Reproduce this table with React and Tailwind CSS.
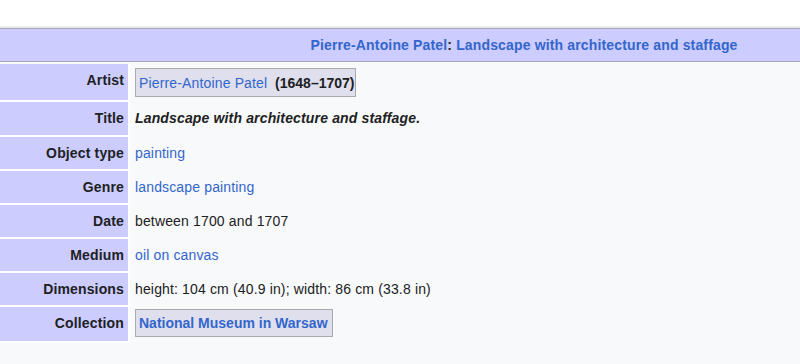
import React from 'react';

const rows = [
    { label: 'Artist', h: 'h-[38px]', kind: 'artist' },
    { label: 'Title', h: 'h-[35px]', kind: 'title' },
    { label: 'Object type', h: 'h-[34px]', kind: 'link', text: 'painting' },
    { label: 'Genre', h: 'h-[34px]', kind: 'link', text: 'landscape painting' },
    { label: 'Date', h: 'h-[34px]', kind: 'text', text: 'between 1700 and 1707' },
    { label: 'Medium', h: 'h-[34px]', kind: 'link', text: 'oil on canvas' },
    { label: 'Dimensions', h: 'h-[34px]', kind: 'text', text: 'height: 104 cm (40.9 in); width: 86 cm (33.8 in)' },
    { label: 'Collection', h: 'h-[36px]', kind: 'collection' },
];

const Value = ({ row }) => {
    if (row.kind === 'artist') {
        return (
            <div className="pt-[4px]">
                <div className="h-[29px] flex items-center border border-[#aaaaaa] bg-[#dfdfee] pl-[3px] pr-[1px]">
                    <a href="#" className="text-[#3366cc]">Pierre-Antoine Patel</a>
                    <span className="font-bold whitespace-pre tracking-normal">{'  (1648–1707)'}</span>
                </div>
            </div>
        );
    }
    if (row.kind === 'collection') {
        return (
            <div className="pt-[2px]">
                <div className="h-[28px] flex items-center border border-[#aaaaaa] bg-[#dfdfee] pl-[3px] pr-[4px]">
                    <a href="#" className="text-[#3366cc] font-bold tracking-normal">National Museum in Warsaw</a>
                </div>
            </div>
        );
    }
    if (row.kind === 'title') {
        return <div className="pt-[7px] font-bold italic">Landscape with architecture and staffage.</div>;
    }
    if (row.kind === 'link') {
        return <div className="pt-[7px]"><a href="#" className="text-[#3366cc]">{row.text}</a></div>;
    }
    return <div className="pt-[7px]">{row.text}</div>;
};

const App = () => {
    return (
        <div className="min-h-screen bg-[#f8f9fa] text-[#202122] text-[14px] leading-[18px] tracking-[0.15px] font-['Liberation_Sans',Arial,sans-serif]">
            <div className="h-[26px] bg-white"></div>
            <div className="h-[2px] bg-[#eaecf0]"></div>

            <div className="h-[34px] border-y border-[#a2a9b1] bg-[#ccccff] flex items-center justify-center pl-[248px] font-bold">
                <a href="#" className="text-[#3366cc]">Pierre-Antoine Patel</a>
                <span>:&nbsp;</span>
                <a href="#" className="text-[#3366cc]">Landscape with architecture and staffage</a>
            </div>
            <div className="h-[2px]"></div>

            <div className="flex flex-col">
                {rows.map((row) => (
                    <div key={row.label} className={`flex ${row.h}`}>
                        <div className="w-[130px] shrink-0 bg-[#ccccff] border-r-2 border-b-2 border-white text-right pr-[4px] pt-[7px] font-bold">
                            {row.label}
                        </div>
                        <div className="flex-1 pl-[5px]">
                            <div className="inline-block">
                                <Value row={row} />
                            </div>
                        </div>
                    </div>
                ))}
            </div>
        </div>
    );
};

export default App;
